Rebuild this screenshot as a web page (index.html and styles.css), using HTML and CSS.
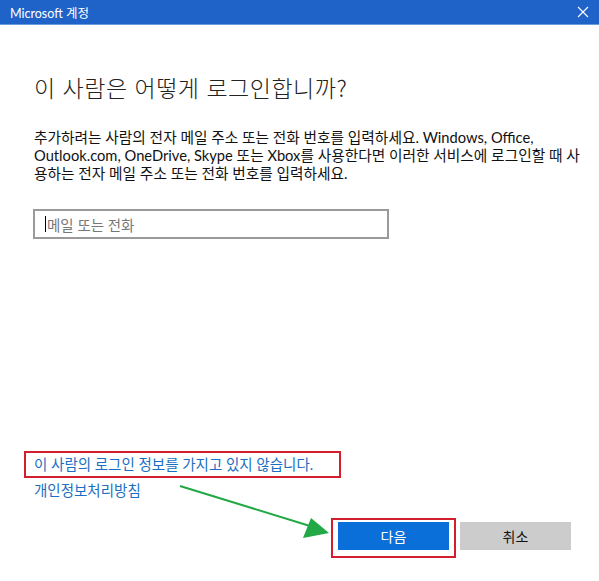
FILE: index.html
```html
<!DOCTYPE html>
<html lang="ko">
<head>
<meta charset="utf-8">
<title>Microsoft 계정</title>
<link rel="stylesheet" href="styles.css">
</head>
<body>
<div class="window">
  <div class="titlebar">
    <span class="title">Microsoft 계정</span>
    <svg class="close" width="12" height="12" viewBox="0 0 12 12"><path d="M1 1L11 11M11 1L1 11" stroke="#fff" stroke-width="1.1" fill="none"/></svg>
  </div>
  <div class="content">
    <h1 class="heading">이 사람은 어떻게 로그인합니까?</h1>
    <p class="desc">추가하려는 사람의 전자 메일 주소 또는 전화 번호를 입력하세요. Windows, Office, Outlook.com, OneDrive, Skype 또는 Xbox<span class="kr-break">를 사용한다면 이러한 서비스에 로그인할 때 사용하는 전자 메일 주소 또는 전화 번호를 입력하세요.</span></p>
    <div class="field"><span class="caret"></span><span class="placeholder">메일 또는 전화</span></div>
    <div class="spacer"></div>
    <div class="links">
      <div class="mark-box link-box"><span class="link">이 사람의 로그인 정보를 가지고 있지 않습니다.</span></div>
      <span class="link privacy">개인정보처리방침</span>
    </div>
    <div class="buttons">
      <div class="mark-box btn-box"><div class="btn primary">다음</div></div>
      <div class="btn secondary">취소</div>
    </div>
  </div>
  <svg class="arrow" width="599" height="581" viewBox="0 0 599 581">
    <line x1="180" y1="486" x2="310" y2="526" stroke="#22a845" stroke-width="2"/>
    <polygon points="329,533 303,538 311,518" fill="#22a845"/>
  </svg>
</div>
</body>
</html>
```
FILE: styles.css
```css
html, body {
  margin: 0;
  padding: 0;
  background: #fff;
}
.window {
  position: relative;
  width: 599px;
  height: 581px;
  display: flex;
  flex-direction: column;
  font-family: "Lato", "Noto Sans CJK KR", sans-serif;
  color: #1a1a1a;
  overflow: hidden;
}
.titlebar {
  height: 24px;
  background: #1f63c9;
  border-bottom: 1px solid #6c9be0;
  display: flex;
  align-items: center;
  justify-content: space-between;
  padding: 0 10px 0 10px;
}
.title {
  color: #fff;
  font-size: 12.5px;
}
.close {
  display: block;
}
.content {
  flex: 1;
  display: flex;
  flex-direction: column;
  padding: 0 0 0 34px;
}
.heading {
  margin: 46px 0 0 0;
  font-family: "Noto Sans CJK KR", sans-serif;
  font-size: 23px;
  font-weight: 300;
  line-height: 32px;
  color: #222;
  letter-spacing: 0.5px;
}
.desc {
  margin: 25px 0 0 0;
  width: 552px;
  font-size: 14.7px;
  line-height: 18px;
  color: #111;
}
.kr-break {
  word-break: break-all;
}
.field {
  box-sizing: border-box;
  margin: 27px 0 0 -1px;
  width: 356px;
  height: 30px;
  border: 2px solid #9a9a9a;
  display: flex;
  align-items: center;
  padding-left: 10px;
}
.caret {
  width: 1px;
  height: 16px;
  background: #000;
  margin-right: 1px;
}
.placeholder {
  font-size: 14.5px;
  color: #777;
}
.spacer {
  flex: 1;
}
.links {
  display: flex;
  flex-direction: column;
  align-items: flex-start;
  margin-left: -10px;
}
.mark-box {
  border: 2px solid #d21f2e;
}
.link-box {
  box-sizing: border-box;
  width: 317px;
  height: 27px;
  display: flex;
  align-items: center;
  padding-left: 8px;
}
.link {
  color: #1a6fc2;
  font-size: 14.5px;
  line-height: 18px;
}
.privacy {
  margin: 4px 0 0 10px;
}
.buttons {
  display: flex;
  align-items: center;
  margin: 18px 0 23px 297px;
}
.btn-box {
  padding: 2px 5px 6px 5px;
}
.btn {
  width: 111px;
  height: 28px;
  display: flex;
  align-items: center;
  justify-content: center;
  font-size: 14px;
}
.primary {
  background: #0a6fd8;
  color: #fff;
}
.secondary {
  background: #cccccc;
  color: #111;
  margin-left: 4px;
  margin-bottom: 4px;
}
.arrow {
  position: absolute;
  left: 0;
  top: 0;
  pointer-events: none;
}
```
